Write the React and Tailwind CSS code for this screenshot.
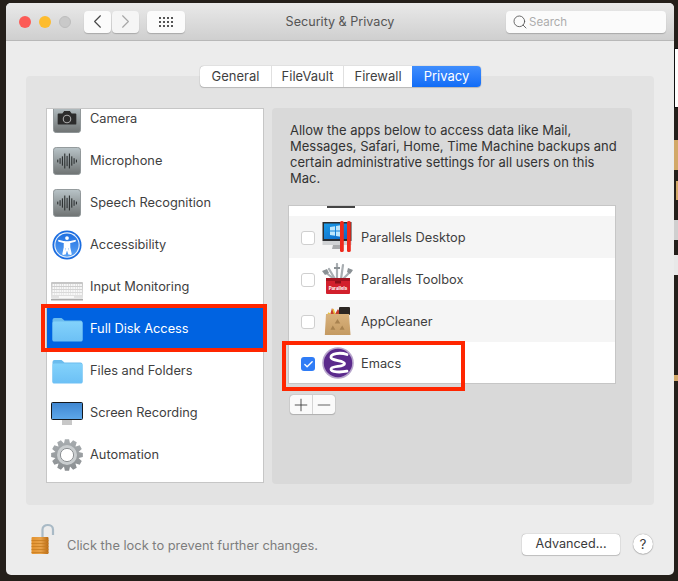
import React from 'react';
import { ChevronLeft, ChevronRight, Search, Plus, Minus, Check } from 'lucide-react';

const GearPath = () => {
  // teeth worked out around the circle
  const pts = [];
  const teeth = 12;
  for (let i = 0; i < teeth; i++) {
    const a = (i / teeth) * Math.PI * 2;
    const w = Math.PI / teeth;
    [[-0.95, 12.2], [-0.5, 16], [0.5, 16], [0.95, 12.2]].forEach(([o, r]) => {
      const t = a + o * w;
      pts.push(`${(16 + r * Math.cos(t)).toFixed(2)} ${(16 + r * Math.sin(t)).toFixed(2)}`);
    });
  }
  return <path d={`M${pts.join('L')}Z`} fill="url(#gear)" />;
};

const CameraIcon = () => (
  <svg width="28" height="28" viewBox="0 0 30 30">
    <defs>
      <linearGradient id="tile1" x1="0" y1="0" x2="0" y2="1">
        <stop offset="0" stopColor="#b9c4c8" />
        <stop offset="1" stopColor="#6f7373" />
      </linearGradient>
    </defs>
    <rect x="0.5" y="0.5" width="29" height="29" rx="3" fill="url(#tile1)" stroke="#8b9193" />
    <path d="M6 9h4l2-2.5h6L20 9h4a1 1 0 0 1 1 1v10a1 1 0 0 1-1 1H6a1 1 0 0 1-1-1V10a1 1 0 0 1 1-1z" fill="#2c2c2c" />
    <circle cx="15" cy="15" r="4" fill="none" stroke="#a8a8a8" strokeWidth="1.2" />
  </svg>
);

const WaveIcon = () => (
  <svg width="28" height="28" viewBox="0 0 30 30">
    <defs>
      <linearGradient id="tile2" x1="0" y1="0" x2="0" y2="1">
        <stop offset="0" stopColor="#b9c4c8" />
        <stop offset="1" stopColor="#6f7373" />
      </linearGradient>
    </defs>
    <rect x="0.5" y="0.5" width="29" height="29" rx="3" fill="url(#tile2)" stroke="#8b9193" />
    {[[4.5, 1.5], [7, 3], [9.5, 5], [12, 8], [14.5, 5.5], [17, 8], [19.5, 5], [22, 3], [24.5, 1.5]].map(([x, h]) => (
      <rect key={x} x={x} y={15 - h} width="1.2" height={h * 2} fill="#2f3334" />
    ))}
  </svg>
);

const AccessIcon = () => (
  <svg width="30" height="30" viewBox="0 0 32 32">
    <defs>
      <linearGradient id="acc" x1="0" y1="0" x2="0" y2="1">
        <stop offset="0" stopColor="#1f6fe0" />
        <stop offset="1" stopColor="#5aa2f5" />
      </linearGradient>
    </defs>
    <circle cx="16" cy="16" r="15.5" fill="#1a6ce0" />
    <circle cx="16" cy="16" r="13.6" fill="#e8f1fb" />
    <circle cx="16" cy="16" r="12.4" fill="url(#acc)" />
    <circle cx="16" cy="8.6" r="2" fill="#fff" />
    <path d="M7.5 11.5l6 1.6v5.4L12 25.6M24.5 11.5l-6 1.6v5.4l1.5 7.1M13.5 13.1h5M16 19l-2.2 6.4M16 19l2.2 6.4" fill="none" stroke="#fff" strokeWidth="2" strokeLinecap="round" />
    <rect x="13.6" y="13" width="4.8" height="6.4" fill="#fff" />
  </svg>
);

const KeyboardIcon = () => (
  <svg width="32" height="20" viewBox="0 0 32 20">
    <defs>
      <linearGradient id="kb" x1="0" y1="0" x2="0" y2="1">
        <stop offset="0" stopColor="#c4c4c4" />
        <stop offset="1" stopColor="#e6e6e6" />
      </linearGradient>
    </defs>
    <rect x="0" y="1" width="32" height="17" rx="1" fill="url(#kb)" />
    {[3, 6, 9, 12].map(y => (
      <g key={y}>
        {Array.from({ length: 13 }).map((_, i) => (
          <rect key={i} x={1.5 + i * 2.3} y={y} width="1.8" height="2" fill="#f8f8f8" />
        ))}
      </g>
    ))}
    <rect x="8" y="15" width="15" height="2" fill="#f8f8f8" />
    <rect x="0" y="18" width="32" height="1.5" fill="#a8a8a8" />
  </svg>
);

const FolderIcon = ({ id }) => (
  <svg width="31" height="25" viewBox="0 0 31 25">
    <defs>
      <linearGradient id={id} x1="0" y1="0" x2="0" y2="1">
        <stop offset="0" stopColor="#83d2fb" />
        <stop offset="1" stopColor="#6cc0f5" />
      </linearGradient>
    </defs>
    <path d="M0.5 3a2 2 0 0 1 2-2h7l3 2.5h16a2 2 0 0 1 2 2v17a1.5 1.5 0 0 1-1.5 1.5H2a1.5 1.5 0 0 1-1.5-1.5z" fill="#6bbcee" />
    <rect x="0.5" y="4.5" width="30" height="20" rx="1.5" fill={`url(#${id})`} />
  </svg>
);

const MonitorIcon = () => (
  <svg width="32" height="24" viewBox="0 0 32 24">
    <defs>
      <linearGradient id="scr" x1="0" y1="0" x2="0" y2="1">
        <stop offset="0" stopColor="#3f86d0" />
        <stop offset="1" stopColor="#5ea8ea" />
      </linearGradient>
    </defs>
    <rect x="11" y="17" width="10" height="6" fill="#c8c8c8" />
    <rect x="0.5" y="0.5" width="31" height="17" rx="1" fill="url(#scr)" stroke="#15181c" />
  </svg>
);

const GearIcon = () => (
  <svg width="32" height="32" viewBox="0 0 32 32">
    <defs>
      <linearGradient id="gear" x1="0" y1="0" x2="0" y2="1">
        <stop offset="0" stopColor="#a8adb0" />
        <stop offset="1" stopColor="#8b8f92" />
      </linearGradient>
    </defs>
    <GearPath />
    <circle cx="16" cy="16" r="10" fill="#c9cdcf" />
    <circle cx="16" cy="16" r="6.6" fill="#fff" stroke="#8c9093" />
  </svg>
);

const ParallelsIcon = () => (
  <svg width="32" height="32" viewBox="0 0 32 32">
    <defs>
      <linearGradient id="pscr" x1="0" y1="0" x2="1" y2="1">
        <stop offset="0" stopColor="#1a9be8" />
        <stop offset="1" stopColor="#0b63c4" />
      </linearGradient>
    </defs>
    <rect x="0.5" y="1" width="29" height="19" fill="#2b2d30" />
    <rect x="2" y="2.5" width="26" height="15.5" fill="url(#pscr)" />
    <path d="M8 6l5-.8v4.4H8zM14 5l6-1v5.6h-6zM8 10.6h5v4.2l-5-.8zM14 10.6h6V16l-6-1z" fill="#bfe6fb" />
    <rect x="0.5" y="20" width="29" height="4" fill="#d0d2d4" />
    <path d="M11 24h8l1 4H10z" fill="#a8aaac" />
    <rect x="18" y="0" width="3.8" height="31" rx="1.6" fill="#ee2a1c" />
    <rect x="25" y="0" width="3.8" height="31" rx="1.6" fill="#ee2a1c" />
  </svg>
);

const ToolboxIcon = () => (
  <svg width="32" height="32" viewBox="0 0 32 32">
    <path d="M3 9l9 7M7 6l6 10M15 1v15M21 2l-2 14M29 8l-8 8" stroke="#a9aeb2" strokeWidth="2.2" strokeLinecap="round" />
    <path d="M0 8l5-2 2 4-4 2zM26 5l5 2-3 4-3-2zM12 4h6v2h-6z" fill="#8b9195" />
    <rect x="4" y="15" width="24" height="16" rx="1" fill="#d2202c" />
    <rect x="4" y="15" width="24" height="3" fill="#a3141f" />
    <rect x="13" y="18" width="6" height="2.5" fill="#8c1019" />
    <text x="16" y="26.5" textAnchor="middle" fontSize="4.5" fontWeight="700" fill="#fff" fontFamily="Inter, sans-serif">Parallels</text>
  </svg>
);

const CleanerIcon = () => (
  <svg width="28" height="30" viewBox="0 0 28 30">
    <defs>
      <linearGradient id="box" x1="0" y1="0" x2="0" y2="1">
        <stop offset="0" stopColor="#d9b27c" />
        <stop offset="1" stopColor="#c49a62" />
      </linearGradient>
    </defs>
    <path d="M6 9l2-7 3 6zM11 8l3-5 3 5z" fill="#c7402f" />
    <rect x="15" y="1" width="11" height="8" rx="1" fill="#2b2622" />
    <path d="M4 7l3 2M9 3l2 6" stroke="#e8c23c" strokeWidth="1.6" />
    <path d="M2 8h23l1.5 21H0.8z" fill="url(#box)" />
    <path d="M13.5 13l2.8 4.5h-5.6zM8.8 19.5l2.6 4.2H6.5zM18.2 19.5l2.4 4.2h-5z" fill="#a8824f" />
  </svg>
);

const EmacsIcon = () => (
  <svg width="32" height="32" viewBox="0 0 32 32">
    <circle cx="16" cy="16" r="15.8" fill="#b7a5cb" />
    <circle cx="16" cy="16" r="14.2" fill="#5b2a8c" />
    <path d="M25 7.5C18 5 8.5 6.5 9 10.5c.5 3.6 13.5 2.6 13.5 6.2 0 3.6-13.5 1.8-13.5 5.3 0 3.6 10 3.4 16 2.2" fill="none" stroke="#fff" strokeWidth="2.8" strokeLinecap="round" />
  </svg>
);

const LockIcon = () => (
  <svg width="25" height="32" viewBox="0 0 25 32">
    <defs>
      <linearGradient id="lockb" x1="0" y1="0" x2="1" y2="0">
        <stop offset="0" stopColor="#e3922e" />
        <stop offset="0.55" stopColor="#e8a24a" />
        <stop offset="1" stopColor="#b96a14" />
      </linearGradient>
    </defs>
    <path d="M11.5 15V6.5c0-6 10.5-6 10.5 0V12" fill="none" stroke="#a9bac6" strokeWidth="2.2" />
    <rect x="0.5" y="14" width="17" height="17" rx="1" fill="url(#lockb)" />
    {[17, 20, 23, 26, 29].map(y => (
      <rect key={y} x="0.5" y={y} width="17" height="0.8" fill="#c77d22" />
    ))}
  </svg>
);

const categories = [
  { label: 'Camera', icon: <CameraIcon />, nudge: 'mt-[2px]' },
  { label: 'Microphone', icon: <WaveIcon />, nudge: 'mt-[2px]' },
  { label: 'Speech Recognition', icon: <WaveIcon />, nudge: 'mt-[2px]' },
  { label: 'Accessibility', icon: <AccessIcon />, nudge: 'mt-[2px]' },
  { label: 'Input Monitoring', icon: <KeyboardIcon />, nudge: 'mt-[9px]' },
  { label: 'Full Disk Access', icon: <FolderIcon id="fold1" />, active: true, nudge: 'mt-[2px]' },
  { label: 'Files and Folders', icon: <FolderIcon id="fold2" />, nudge: 'mt-[2px]' },
  { label: 'Screen Recording', icon: <MonitorIcon />, nudge: 'mt-[4px]' },
  { label: 'Automation', icon: <GearIcon />, nudge: 'mt-[2px]' },
];

const apps = [
  { name: 'Parallels Desktop', icon: <ParallelsIcon />, striped: true },
  { name: 'Parallels Toolbox', icon: <ToolboxIcon /> },
  { name: 'AppCleaner', icon: <CleanerIcon />, striped: true },
  { name: 'Emacs', icon: <EmacsIcon />, checked: true },
];

const App = () => {
  return (
    <div className="relative w-[678px] h-[581px] overflow-hidden bg-[#241f1a] pt-[3px] pl-[6px] font-['Inter',sans-serif] text-[#3f3f3f]">
      {/* bits of the desktop showing behind the window */}
      <div className="absolute left-[674px] top-[48px] w-[4px] h-[60px] bg-white border-y border-l border-[#111]" />
      <div className="absolute left-[674px] top-[140px] w-[4px] h-[30px] bg-[#d2a868]" />
      <div className="absolute left-[676px] top-[181px] w-[2px] h-[19px] bg-[#d2a868]" />
      <div className="absolute left-[674px] top-[220px] w-[4px] h-[20px] bg-[#cfcfcf]" />
      <div className="absolute left-[674px] top-[255px] w-[4px] h-[20px] bg-[#e8e8e8]" />
      <div className="absolute left-[674px] top-[375px] w-[4px] h-[6px] bg-[#d2a868]" />

      <div className="w-[668px] h-[572px] flex flex-col rounded-[5px] overflow-hidden bg-[#ececec]">
        {/* title bar */}
        <div className="h-[38px] shrink-0 grid grid-cols-[1fr_auto_1fr] items-center bg-gradient-to-b from-[#e9e9e9] to-[#cfcfcf] border-b border-[#b8b8b8]">
          <div className="flex items-center pl-[13px]">
            <div className="flex gap-2">
              <div className="w-3 h-3 rounded-full bg-[#fc5b57]" />
              <div className="w-3 h-3 rounded-full bg-[#fdbc2e]" />
              <div className="w-3 h-3 rounded-full bg-[#c9c9c9] border border-[#bdbdbd]" />
            </div>
            <button className="ml-[13px] w-[27px] h-[22px] flex items-center justify-center rounded-[4px] bg-[#fbfbfb] shadow-[0_1px_1px_rgba(0,0,0,0.2)]">
              <ChevronLeft size={23} strokeWidth={1.2} className="text-[#4a4a4a]" />
            </button>
            <button className="ml-[1px] w-[27px] h-[22px] flex items-center justify-center rounded-[4px] bg-[#f5f5f5] shadow-[0_1px_1px_rgba(0,0,0,0.2)]">
              <ChevronRight size={23} strokeWidth={1.2} className="text-[#a8a8a8]" />
            </button>
            <button className="ml-[8px] w-[38px] h-[22px] grid grid-cols-[repeat(4,2px)] gap-x-[2px] gap-y-[2px] place-content-center rounded-[4px] bg-[#fbfbfb] shadow-[0_1px_1px_rgba(0,0,0,0.2)]">
              {Array.from({ length: 12 }).map((_, i) => (
                <span key={i} className="w-[2px] h-[2px] bg-[#555]" />
              ))}
            </button>
          </div>
          <div className="pt-[1px] text-[12.6px] text-[#555]">Security &amp; Privacy</div>
          <div className="flex justify-end pr-[8px]">
            <div className="w-[160px] h-[22px] flex items-center gap-[1px] pl-[6px] rounded-[4px] bg-[#fbfbfb] shadow-[0_1px_1px_rgba(0,0,0,0.2)]">
              <Search size={16} strokeWidth={1.3} className="text-[#555]" />
              <span className="mt-[2px] text-[11.5px] text-[#adadad]">Search</span>
            </div>
          </div>
        </div>

        {/* content panel */}
        <div className="relative ml-[20px] mt-[35px] w-[628px] h-[429px] flex gap-[8px] pl-[20px] pt-[32px] rounded-[4px] bg-[#e3e3e3]">
          {/* tab bar hangs over the panel's top edge */}
          <div className="absolute left-[174px] -top-[10px] h-[21px] flex rounded-[4px] bg-white text-[13px] shadow-[0_0_1px_rgba(0,0,0,0.45),0_1px_1px_rgba(0,0,0,0.15)] overflow-hidden">
            <div className="w-[72px] flex items-center justify-center border-r border-[#e0e0e0]">General</div>
            <div className="w-[72px] flex items-center justify-center border-r border-[#e0e0e0]">FileVault</div>
            <div className="w-[68px] flex items-center justify-center">Firewall</div>
            <div className="w-[69px] flex items-center justify-center text-white bg-gradient-to-b from-[#3f8dfd] to-[#106cf6]">Privacy</div>
          </div>

          {/* category list */}
          <div className="w-[218px] h-[375px] overflow-hidden bg-white border border-[#c6c6c6]">
            <div className="-mt-[12px]">
              {categories.map(c => (
                <div key={c.label} className={`h-[42px] flex items-center ${c.active ? 'bg-[#0063e1] text-white' : ''}`}>
                  <div className={`w-[40px] shrink-0 flex items-center justify-center ${c.nudge}`}>{c.icon}</div>
                  <span className="ml-[3px] mt-[2px] text-[12.8px]">{c.label}</span>
                </div>
              ))}
            </div>
          </div>

          {/* detail pane */}
          <div className="w-[360px] h-[376px] rounded-[4px] bg-[#d9d9d9] pl-[18px] pt-[14px]">
            <p className="w-[332px] text-[13px] leading-[16px] text-[#333]">
              Allow the apps below to access data like Mail, Messages, Safari, Home, Time Machine backups and certain administrative settings for all users on this Mac.
            </p>
            <div className="mt-[19px] -ml-[2px] w-[328px] h-[179px] overflow-hidden bg-white border border-[#c6c6c6]">
              <div className="h-[10px] flex justify-center pr-[222px] bg-white">
                <div className="w-[28px] h-[2px] bg-[#444]" />
              </div>
              {apps.map(a => (
                <div key={a.name} className={`h-[42px] flex items-center pl-[12px] ${a.striped ? 'bg-[#f5f5f5]' : 'bg-white'}`}>
                  {a.checked ? (
                    <div className="mt-[2px] w-[14px] h-[14px] flex items-center justify-center rounded-[3px] bg-[#2f7cf6]">
                      <Check size={11} strokeWidth={3} className="text-white" />
                    </div>
                  ) : (
                    <div className="mt-[2px] w-[14px] h-[14px] rounded-[3px] bg-white border border-[#cfcfcf]" />
                  )}
                  <div className="w-[32px] ml-[7px] flex items-center justify-center">{a.icon}</div>
                  <span className="ml-[7px] mt-[2px] text-[12.8px]">{a.name}</span>
                </div>
              ))}
            </div>
            <div className="mt-[11px] w-[45px] h-[19px] flex rounded-[3px] bg-[#fafafa] shadow-[0_0_1px_rgba(0,0,0,0.5),0_1px_1px_rgba(0,0,0,0.15)]">
              <div className="flex-1 flex items-center justify-center border-r border-[#d4d4d4]">
                <Plus size={20} strokeWidth={1} className="text-[#333]" />
              </div>
              <div className="flex-1 flex items-center justify-center">
                <Minus size={20} strokeWidth={1} className="text-[#444]" />
              </div>
            </div>
          </div>
        </div>

        {/* footer */}
        <div className="flex items-center mt-[18px] pl-[25px] pr-[21px] h-[32px]">
          <LockIcon />
          <span className="ml-[11px] mt-[14px] text-[12.85px] text-[#7d7d7d]">Click the lock to prevent further changes.</span>
          <button className="ml-auto mt-[10px] w-[98px] h-[21px] flex items-center justify-center rounded-[4px] bg-white text-[12.6px] text-[#3a3a3a] shadow-[0_0_1px_rgba(0,0,0,0.5),0_1px_1px_rgba(0,0,0,0.15)]">Advanced...</button>
          <button className="ml-[13px] mt-[10px] w-[20px] h-[20px] flex items-center justify-center rounded-full bg-white text-[13.5px] text-[#3a3a3a] shadow-[0_0_1px_rgba(0,0,0,0.5),0_1px_1px_rgba(0,0,0,0.15)]">?</button>
        </div>
      </div>

      {/* red annotation boxes */}
      <div className="absolute left-[41px] top-[304px] w-[226px] h-[48px] border-[4px] border-[#ff2600]" />
      <div className="absolute left-[282px] top-[341px] w-[183px] h-[50px] border-[4px] border-[#ff2600]" />
    </div>
  );
};

export default App;
